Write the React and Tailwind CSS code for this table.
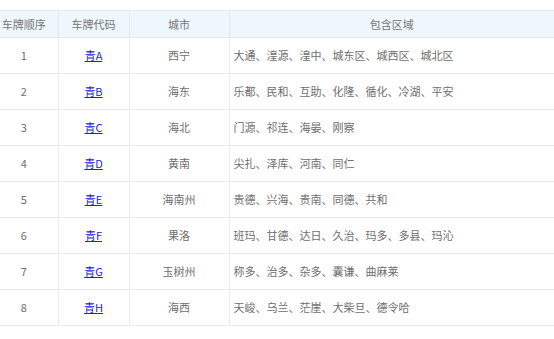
import React from "react";

const rows = [
  { no: 1, code: "青A", city: "西宁", area: "大通、湟源、湟中、城东区、城西区、城北区" },
  { no: 2, code: "青B", city: "海东", area: "乐都、民和、互助、化隆、循化、冷湖、平安" },
  { no: 3, code: "青C", city: "海北", area: "门源、祁连、海晏、刚察" },
  { no: 4, code: "青D", city: "黄南", area: "尖扎、泽库、河南、同仁" },
  { no: 5, code: "青E", city: "海南州", area: "贵德、兴海、贵南、同德、共和" },
  { no: 6, code: "青F", city: "果洛", area: "班玛、甘德、达日、久治、玛多、多县、玛沁" },
  { no: 7, code: "青G", city: "玉树州", area: "称多、治多、杂多、囊谦、曲麻莱" },
  { no: 8, code: "青H", city: "海西", area: "天峻、乌兰、茫崖、大柴旦、德令哈" },
];

const font = { fontFamily: '"Noto Sans CJK SC", "Noto Sans", sans-serif' };

export default function App() {
  return (
    <div className="w-[554px] h-[339px] bg-white overflow-hidden pt-[10px]" style={font}>
      <table className="w-[620px] -ml-[10px] border-collapse text-[11px] text-[#6e6e6e] table-fixed">
        <colgroup>
          <col className="w-[68px]" />
          <col className="w-[71px]" />
          <col className="w-[100px]" />
          <col />
        </colgroup>
        <thead>
          <tr className="h-[27px] bg-[#eef6fe] text-[#777]">
            <th className="font-normal border-y border-[#e3e9f0] text-center">车牌顺序</th>
            <th className="font-normal border border-[#e3e9f0] text-center">车牌代码</th>
            <th className="font-normal border border-[#e3e9f0] text-center">城市</th>
            <th className="font-normal border-y border-l border-[#e3e9f0] text-center pr-[56px]">包含区域</th>
          </tr>
        </thead>
        <tbody>
          {rows.map((r) => (
            <tr key={r.no} className="h-[36px]">
              <td className="border-b border-[#ececec] text-center">{r.no}</td>
              <td className="border border-t-0 border-[#ececec] text-center">
                <a href="#" className="text-[#2323d6] underline">{r.code}</a>
              </td>
              <td className="border border-t-0 border-[#ececec] text-center">{r.city}</td>
              <td className="border-b border-l border-[#ececec] pl-[4px]">{r.area}</td>
            </tr>
          ))}
        </tbody>
      </table>
    </div>
  );
}
